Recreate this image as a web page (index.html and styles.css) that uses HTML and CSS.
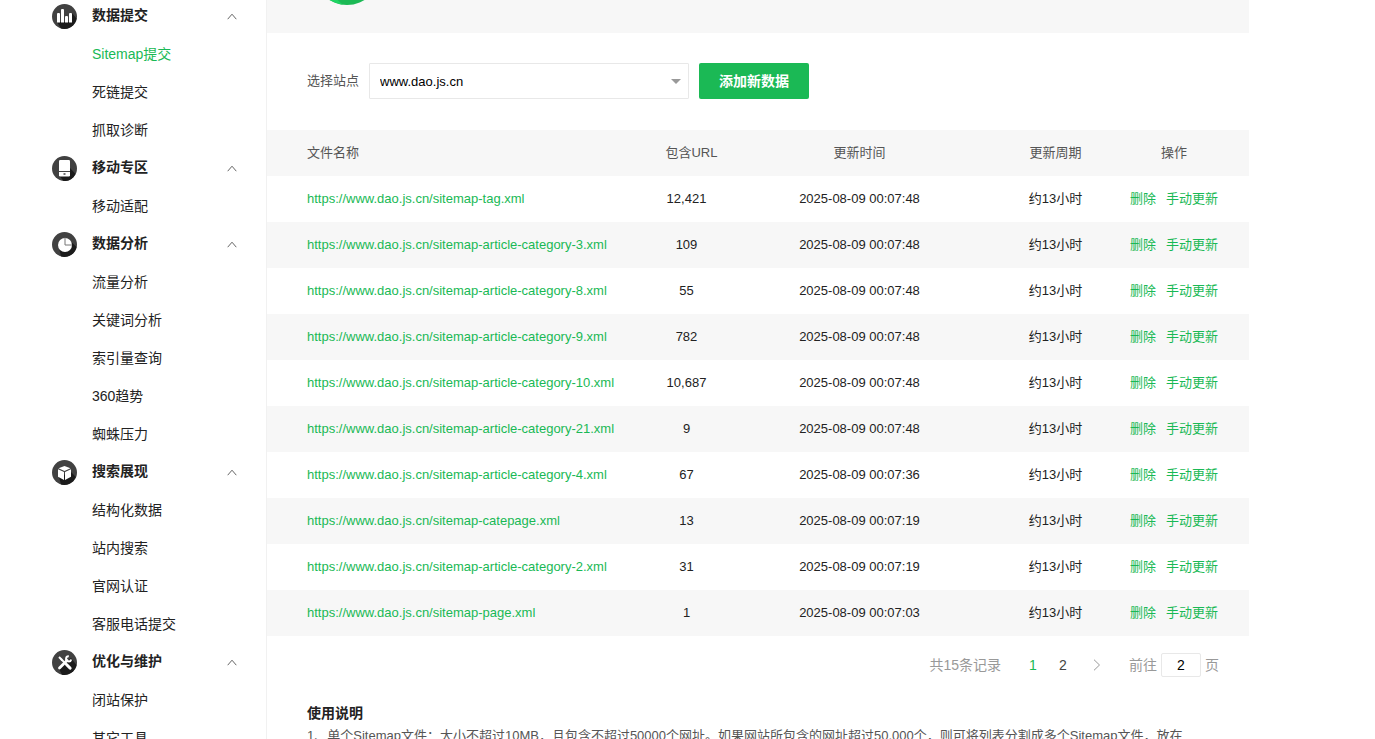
FILE: index.html
```html
<!DOCTYPE html>
<html lang="zh-CN">
<head>
<meta charset="utf-8">
<title>Sitemap提交</title>
<link rel="stylesheet" href="styles.css">
</head>
<body>
<div class="page">
  <nav class="sidebar">
    <section class="group">
      <button class="group-title" type="button">
        <svg class="badge" viewBox="0 0 25 25"><circle cx="12.500" cy="12.500" r="12.500" fill="#414141"/><path d="M5 18l4 6.500a12.500 12.500 0 0 0 15.500-10L20 9v9z" fill="#1b1b1b"/><path d="M5 10q0-1 1-1h1q1 0 1 1v8.500H5zM9 6q0-1 1-1h1q1 0 1 1v12.500H9zM13 13q0-1 1-1h1q1 0 1 1v5.500h-3zM17 10q0-1 1-1h1q1 0 1 1v8.500h-3z" fill="#fff"/></svg>
        <span>数据提交</span>
        <svg class="caret" viewBox="0 0 10 7"><path d="M.7 6.200 5 1.200l4.300 5"/></svg>
      </button>
      <a class="item active" href="#">Sitemap提交</a>
      <a class="item" href="#">死链提交</a>
      <a class="item" href="#">抓取诊断</a>
    </section>
    <section class="group">
      <button class="group-title" type="button">
        <svg class="badge" viewBox="0 0 25 25"><circle cx="12.500" cy="12.500" r="12.500" fill="#414141"/><path d="M7.500 20l4 5A12.500 12.500 0 0 0 23.500 18L18 12z" fill="#1b1b1b"/><rect x="7" y="4" width="11" height="16.500" rx="1.200" fill="#fff"/><path d="M7 15.500h11" stroke="#444" stroke-width="1"/><path d="M11.500 18h2" stroke="#444" stroke-width="1.500"/></svg>
        <span>移动专区</span>
        <svg class="caret" viewBox="0 0 10 7"><path d="M.7 6.200 5 1.200l4.300 5"/></svg>
      </button>
      <a class="item" href="#">移动适配</a>
    </section>
    <section class="group">
      <button class="group-title" type="button">
        <svg class="badge" viewBox="0 0 25 25"><circle cx="12.500" cy="12.500" r="12.500" fill="#414141"/><path d="M7.500 18l1.500 6.500A12.500 12.500 0 0 0 24.500 15l-5-5z" fill="#1b1b1b"/><circle cx="13" cy="13" r="7" fill="#fff"/><path d="M13 5.500V13h7" fill="none" stroke="#777" stroke-width="1"/></svg>
        <span>数据分析</span>
        <svg class="caret" viewBox="0 0 10 7"><path d="M.7 6.200 5 1.200l4.300 5"/></svg>
      </button>
      <a class="item" href="#">流量分析</a>
      <a class="item" href="#">关键词分析</a>
      <a class="item" href="#">索引量查询</a>
      <a class="item" href="#">360趋势</a>
      <a class="item" href="#">蜘蛛压力</a>
    </section>
    <section class="group">
      <button class="group-title" type="button">
        <svg class="badge" viewBox="0 0 25 25"><circle cx="12.500" cy="12.500" r="12.500" fill="#414141"/><path d="M7 17l2 7.500A12.500 12.500 0 0 0 23.800 17L19 12z" fill="#1b1b1b"/><path d="M12.500 6 18.500 8.200 12.500 11 6.500 8.200zM6 9.200l6 2.800v8l-6-3.200zM19 9.200v7.600L13 20v-8z" fill="#fff"/></svg>
        <span>搜索展现</span>
        <svg class="caret" viewBox="0 0 10 7"><path d="M.7 6.200 5 1.200l4.300 5"/></svg>
      </button>
      <a class="item" href="#">结构化数据</a>
      <a class="item" href="#">站内搜索</a>
      <a class="item" href="#">官网认证</a>
      <a class="item" href="#">客服电话提交</a>
    </section>
    <section class="group">
      <button class="group-title" type="button">
        <svg class="badge" viewBox="0 0 25 25"><circle cx="12.500" cy="12.500" r="12.500" fill="#414141"/><path d="M7 19l3 5.700A12.500 12.500 0 0 0 24.500 15L19 8z" fill="#1b1b1b"/><g fill="none" stroke="#fff"><path d="M7 7l3 3" stroke-width="2"/><path d="M9.500 9.500l9 9" stroke-width="1.800" stroke-linecap="round"/><path d="M14.500 14.500l3.500 3.500" stroke-width="3" stroke-linecap="round"/><path d="M7.500 18 15 10.500" stroke-width="2.800" stroke-linecap="round"/><path d="M16.800 6.200a2.600 2.600 0 1 0 2.400 3.200" stroke-width="2"/></g></svg>
        <span>优化与维护</span>
        <svg class="caret" viewBox="0 0 10 7"><path d="M.7 6.200 5 1.200l4.300 5"/></svg>
      </button>
      <a class="item" href="#">闭站保护</a>
      <a class="item" href="#">其它工具</a>
    </section>
  </nav>

  <main class="content">
    <header class="banner">
      <svg class="banner-mark" viewBox="0 61 66 5"><circle cx="33" cy="33" r="33" fill="#1bb955"/><path d="M14 60h9q2 3 6 5.700Q20 64 14 60z" fill="#1fd463"/></svg>
    </header>

    <form class="toolbar">
      <label for="site">选择站点</label>
      <span class="select-box">
        <select id="site"><option>www.dao.js.cn</option></select>
        <svg class="arrow" viewBox="0 0 10 5"><path d="M0 0h10L5 5z"/></svg>
      </span>
      <button class="primary" type="button">添加新数据</button>
    </form>

    <table class="files">
      <colgroup><col><col class="c-count"><col class="c-time"><col class="c-cycle"><col class="c-ops"></colgroup>
      <thead><tr><th>文件名称</th><th class="count-head">包含URL</th><th>更新时间</th><th>更新周期</th><th>操作</th></tr></thead>
      <tbody>
        <tr><td><a href="#">https://www.dao.js.cn/sitemap-tag.xml</a></td><td>12,421</td><td>2025-08-09 00:07:48</td><td>约13小时</td><td><div class="ops"><a href="#">删除</a><a href="#">手动更新</a></div></td></tr>
        <tr><td><a href="#">https://www.dao.js.cn/sitemap-article-category-3.xml</a></td><td>109</td><td>2025-08-09 00:07:48</td><td>约13小时</td><td><div class="ops"><a href="#">删除</a><a href="#">手动更新</a></div></td></tr>
        <tr><td><a href="#">https://www.dao.js.cn/sitemap-article-category-8.xml</a></td><td>55</td><td>2025-08-09 00:07:48</td><td>约13小时</td><td><div class="ops"><a href="#">删除</a><a href="#">手动更新</a></div></td></tr>
        <tr><td><a href="#">https://www.dao.js.cn/sitemap-article-category-9.xml</a></td><td>782</td><td>2025-08-09 00:07:48</td><td>约13小时</td><td><div class="ops"><a href="#">删除</a><a href="#">手动更新</a></div></td></tr>
        <tr><td><a href="#">https://www.dao.js.cn/sitemap-article-category-10.xml</a></td><td>10,687</td><td>2025-08-09 00:07:48</td><td>约13小时</td><td><div class="ops"><a href="#">删除</a><a href="#">手动更新</a></div></td></tr>
        <tr><td><a href="#">https://www.dao.js.cn/sitemap-article-category-21.xml</a></td><td>9</td><td>2025-08-09 00:07:48</td><td>约13小时</td><td><div class="ops"><a href="#">删除</a><a href="#">手动更新</a></div></td></tr>
        <tr><td><a href="#">https://www.dao.js.cn/sitemap-article-category-4.xml</a></td><td>67</td><td>2025-08-09 00:07:36</td><td>约13小时</td><td><div class="ops"><a href="#">删除</a><a href="#">手动更新</a></div></td></tr>
        <tr><td><a href="#">https://www.dao.js.cn/sitemap-catepage.xml</a></td><td>13</td><td>2025-08-09 00:07:19</td><td>约13小时</td><td><div class="ops"><a href="#">删除</a><a href="#">手动更新</a></div></td></tr>
        <tr><td><a href="#">https://www.dao.js.cn/sitemap-article-category-2.xml</a></td><td>31</td><td>2025-08-09 00:07:19</td><td>约13小时</td><td><div class="ops"><a href="#">删除</a><a href="#">手动更新</a></div></td></tr>
        <tr><td><a href="#">https://www.dao.js.cn/sitemap-page.xml</a></td><td>1</td><td>2025-08-09 00:07:03</td><td>约13小时</td><td><div class="ops"><a href="#">删除</a><a href="#">手动更新</a></div></td></tr>
      </tbody>
    </table>

    <div class="pager">
      <span class="total">共15条记录</span>
      <a class="num current" href="#">1</a>
      <a class="num" href="#">2</a>
      <a class="next" href="#" aria-label="下一页"><svg viewBox="0 0 8 12"><path d="M1 .7 6.500 6 1 11.300"/></svg></a>
      <label for="goto">前往</label>
      <input id="goto" type="text" value="2">
      <span>页</span>
    </div>

    <section class="help">
      <h2>使用说明</h2>
      <p>1、单个Sitemap文件：大小不超过10MB，且包含不超过50000个网址。如果网站所包含的网址超过50,000个，则可将列表分割成多个Sitemap文件，放在</p>
    </section>
  </main>
</div>
</body>
</html>
```
FILE: styles.css
```css
* { box-sizing: border-box; }
body {
  margin: 0;
  background: #fff;
  color: #222;
  font: 13px/20px "Liberation Sans", "Noto Sans CJK SC", sans-serif;
}
a { color: #19b955; text-decoration: none; }
button, input, select { font-family: inherit; }

.page {
  display: flex;
  height: 100vh;
  overflow: hidden;
  padding-right: 126px;
}

.sidebar {
  flex: 0 0 267px;
  padding-left: 52px;
  border-right: 1px solid #f1f1f1;
}
.group:first-child { margin-top: -3px; }
.group-title {
  display: flex;
  align-items: center;
  gap: 15px;
  width: 100%;
  height: 38px;
  padding: 0 29px 0 0;
  border: 0;
  background: none;
  color: #222;
  font-size: 14px;
  line-height: 20px;
  font-weight: 700;
  text-align: left;
}
.group-title span { padding-bottom: 2px; }
.badge { width: 25px; height: 25px; }
.caret {
  width: 10px;
  height: 7px;
  margin-left: auto;
  fill: none;
  stroke: #666;
}
.item {
  display: block;
  padding-left: 40px;
  color: #222;
  font-size: 14px;
  line-height: 38px;
}
.item.active { color: #19b955; }

.content { flex: 1; min-width: 0; }
.banner {
  height: 33px;
  padding-left: 47px;
  background: #f7f7f7;
}
.banner-mark { display: block; width: 66px; height: 5px; }

.toolbar {
  display: flex;
  align-items: center;
  gap: 10px;
  padding: 30px 40px;
  color: #555;
}
.select-box { position: relative; width: 320px; }
.select-box select {
  display: block;
  width: 100%;
  height: 36px;
  padding: 0 30px 0 10px;
  border: 1px solid #e8e8e8;
  border-radius: 1px;
  background: #fff;
  color: #000;
  font-size: 13px;
  appearance: none;
}
.arrow {
  position: absolute;
  top: 16px;
  right: 8px;
  width: 10px;
  height: 5px;
  fill: #999;
  pointer-events: none;
}
.primary {
  height: 36px;
  padding: 0 20px 2px;
  border: 0;
  border-radius: 2px;
  background: #1bb955;
  color: #fff;
  font-size: 14px;
  font-weight: 700;
}

.files {
  width: 100%;
  margin-top: 1px;
  border-collapse: collapse;
  table-layout: fixed;
  text-align: center;
}
.c-count { width: 93px; }
.c-time { width: 253px; }
.c-cycle { width: 139px; }
.c-ops { width: 124px; }
.files th { color: #555; font-weight: 400; }
.files th, .files td { height: 46px; padding: 0; }
.files th:first-child, .files td:first-child { padding-left: 40px; text-align: left; }
.files th:last-child, .files td:last-child { padding-right: 26px; }
.files .count-head { padding-left: 10px; }
.files thead tr, .files tbody tr:nth-child(even) { background: #f7f7f7; }
.ops { display: flex; justify-content: center; gap: 10px; white-space: nowrap; }

.pager {
  display: flex;
  justify-content: flex-end;
  align-items: center;
  height: 57px;
  padding-right: 30px;
  color: #999;
  font-size: 14px;
}
.total { margin-right: 17px; }
.num { width: 30px; color: #444; text-align: center; }
.num.current { color: #19b955; }
.next { display: flex; padding: 0 28px 0 15px; }
.next svg { width: 8px; height: 12px; fill: none; stroke: #999; }
.pager input {
  width: 40px;
  height: 24px;
  margin: 0 4px;
  padding: 0;
  border: 1px solid #e8e8e8;
  border-radius: 2px;
  color: #000;
  font-size: 14px;
  text-align: center;
}

.help { padding: 9px 40px; color: #555; }
.help h2 { margin: 0; color: #222; font-size: 14px; line-height: 22px; }
.help p { margin: 0; line-height: 24px; }
```
